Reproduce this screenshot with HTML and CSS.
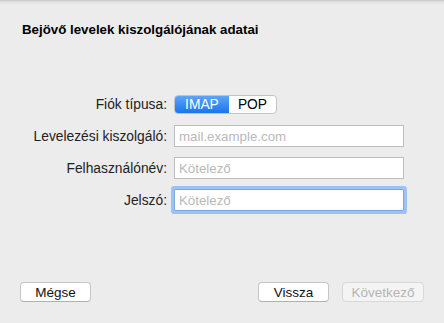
FILE: index.html
```html
<!DOCTYPE html>
<html lang="hu">

<head>
    <meta charset="UTF-8">
    <title>Bejövő levelek</title>
    <link rel="stylesheet" href="styles.css">
</head>

<body>
    <div class="sheet">
        <h1 class="title">Bejövő levelek kiszolgálójának adatai</h1>

        <div class="form">
            <label class="lbl">Fiók típusa:</label>
            <div class="seg">
                <span class="seg-item on">IMAP</span>
                <span class="seg-item pop">POP</span>
            </div>

            <label class="lbl">Levelezési kiszolgáló:</label>
            <input type="text" class="field" placeholder="mail.example.com">

            <label class="lbl">Felhasználónév:</label>
            <input type="text" class="field" placeholder="Kötelező">

            <label class="lbl">Jelszó:</label>
            <input type="password" class="field focus" placeholder="Kötelező">
        </div>

        <div class="footer">
            <button class="btn">Mégse</button>
            <div class="right">
                <button class="btn">Vissza</button>
                <button class="btn next" disabled>Következő</button>
            </div>
        </div>
    </div>
</body>

</html>
```

FILE: styles.css
```css
* {
    margin: 0;
    padding: 0;
    box-sizing: border-box;
}

body {
    background: #ececec;
    font-family: "Liberation Sans", Arial, sans-serif;
    font-size: 13px;
    color: #1a1a1a;
}

.sheet {
    width: 444px;
    height: 323px;
    display: flex;
    flex-direction: column;
    background: linear-gradient(#c8c8c8, #e3e3e3 2px, #ececec 5px);
}

.title {
    font-size: 13.3px;
    font-weight: bold;
    line-height: 16px;
    margin: 22px 0 0 22px;
    color: #000;
}

/* label + control rows */
.form {
    display: grid;
    grid-template-columns: 146px 230px;
    grid-auto-rows: 22px;
    column-gap: 7px;
    row-gap: 10px;
    margin: 55px 0 0 21px;
    align-items: center;
}

.lbl {
    text-align: right;
    color: #222;
    font-size: 13.8px;
}

.seg {
    display: flex;
    height: 19px;
    width: 103px;
    border: 1px solid #c4c4c4;
    border-radius: 4px;
    overflow: hidden;
    background: #fff;
}

.seg-item {
    line-height: 17px;
    text-align: center;
    font-size: 13.8px;
}

.on {
    width: 55px;
    color: #fff;
    background: linear-gradient(#5ba6fa, #1b74ee);
}

.pop {
    width: 48px;
    color: #000;
}

.field {
    width: 230px;
    height: 22px;
    border: 1px solid #bdbdbd;
    background: #fff;
    padding: 0 4px;
    font: 13.3px "Liberation Sans", Arial, sans-serif;
    outline: none;
}

.field::placeholder {
    color: #b9b9b9;
}

.focus {
    border-color: #7aa7e6;
    box-shadow: 0 0 0 3px #9ec3f3;
    border-radius: 1px;
}

.footer {
    margin-top: auto;
    display: flex;
    justify-content: space-between;
    padding: 0 20px 21px 20px;
}

.right {
    display: flex;
    gap: 13px;
}

.btn {
    width: 71px;
    height: 20px;
    border: 1px solid #c6c6c6;
    border-bottom-color: #b0b0b0;
    border-radius: 4px;
    background: #fff;
    font: 13.5px "Liberation Sans", Arial, sans-serif;
    color: #111;
}

.next {
    width: 82px;
    color: #b5b5b5;
    background: #f4f4f4;
    border-color: #d8d8d8;
}
```
